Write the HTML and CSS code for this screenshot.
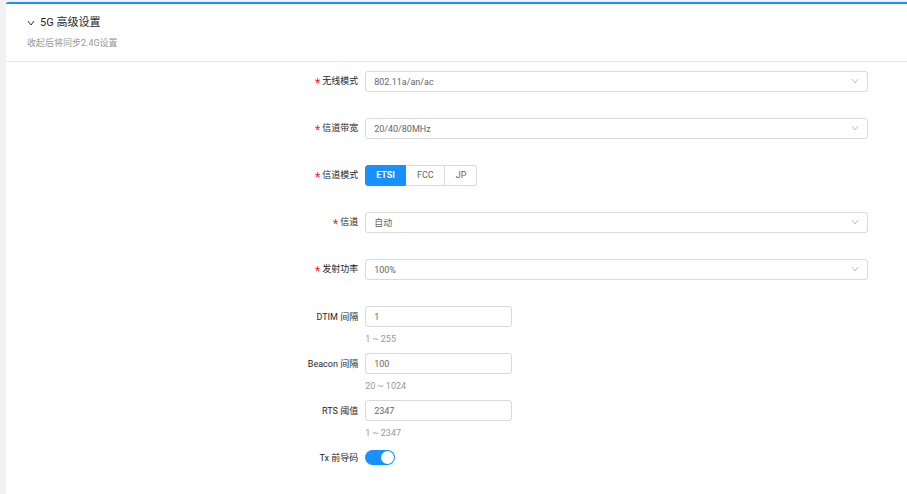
FILE: index.html
```
<!DOCTYPE html>
<html lang="zh-CN">
<head>
    <meta charset="UTF-8">
    <meta name="viewport" content="width=device-width, initial-scale=1.0">
    <title>5G 高级设置</title>
    <link rel="stylesheet" href="styles.css">
</head>
<body>
    <div class="card">
        <div class="card-head">
            <button type="button" class="collapse-btn">
                <svg class="arrow" viewBox="0 0 8 8"><path d="M1 2l3 4 3-4"/></svg>
                5G 高级设置
            </button>
            <p class="tip">收起后将同步2.4G设置</p>
        </div>
        <form class="form">
            <div class="form-item required">
                <label for="mode">无线模式</label>
                <div class="select">
                    <select id="mode"><option>802.11a/an/ac</option></select>
                    <svg class="arrow" viewBox="0 0 8 8"><path d="M1 2l3 4 3-4"/></svg>
                </div>
            </div>
            <div class="form-item required">
                <label for="bandwidth">信道带宽</label>
                <div class="select">
                    <select id="bandwidth"><option>20/40/80MHz</option></select>
                    <svg class="arrow" viewBox="0 0 8 8"><path d="M1 2l3 4 3-4"/></svg>
                </div>
            </div>
            <div class="form-item required">
                <label for="etsi">信道模式</label>
                <div class="radio-group">
                    <input type="radio" name="region" id="etsi" checked><label for="etsi">ETSI</label>
                    <input type="radio" name="region" id="fcc"><label for="fcc">FCC</label>
                    <input type="radio" name="region" id="jp"><label for="jp">JP</label>
                </div>
            </div>
            <div class="form-item required">
                <label for="channel">信道</label>
                <div class="select">
                    <select id="channel"><option>自动</option></select>
                    <svg class="arrow" viewBox="0 0 8 8"><path d="M1 2l3 4 3-4"/></svg>
                </div>
            </div>
            <div class="form-item required">
                <label for="power">发射功率</label>
                <div class="select">
                    <select id="power"><option>100%</option></select>
                    <svg class="arrow" viewBox="0 0 8 8"><path d="M1 2l3 4 3-4"/></svg>
                </div>
            </div>
            <div class="form-item">
                <label for="dtim">DTIM 间隔</label>
                <input type="text" class="input" id="dtim" value="1">
                <span class="extra">1 ~ 255</span>
            </div>
            <div class="form-item">
                <label for="beacon">Beacon 间隔</label>
                <input type="text" class="input" id="beacon" value="100">
                <span class="extra">20 ~ 1024</span>
            </div>
            <div class="form-item">
                <label for="rts">RTS 阈值</label>
                <input type="text" class="input" id="rts" value="2347">
                <span class="extra">1 ~ 2347</span>
            </div>
            <div class="form-item">
                <label for="preamble">Tx 前导码</label>
                <input type="checkbox" class="switch" id="preamble" checked>
            </div>
        </form>
    </div>
</body>
</html>
```
FILE: styles.css
```
* {
    box-sizing: border-box;
}
body {
    margin: 0;
    padding: 2px 0 0 6px;
    background: #f0f2f5;
    color: #262626;
    font-family: Roboto, "Noto Sans CJK SC", sans-serif;
    font-size: 9px;
    line-height: 14px;
}
.card {
    min-height: calc(100vh - 2px);
    background: #fff;
    border-top: 2px solid #1890ff;
    border-top-left-radius: 2px;
}
.card-head {
    padding: 11px 21px;
    border-bottom: 1px solid #e8e8e8;
}
.collapse-btn {
    display: flex;
    align-items: center;
    gap: 5px;
    padding: 0;
    border: none;
    background: none;
    color: #262626;
    font: inherit;
    font-size: 11px;
    line-height: 16px;
    cursor: pointer;
}
.arrow {
    width: 8px;
    height: 8px;
    fill: none;
    stroke: #333;
    stroke-width: 1;
}
.tip {
    margin: 5px 0 0;
    color: #999;
}
.form {
    padding: 9px 39px 0 0;
}
.form-item {
    display: grid;
    grid-template-columns: 10fr 14fr;
    align-items: center;
    grid-template-rows: 21px 26px;
}
.form-item > label {
    padding-right: 7px;
    text-align: right;
}
.required > label::before {
    content: "*";
    margin-right: 2px;
    color: #f5222d;
    font-size: 12px;
    line-height: 1;
    vertical-align: -3px;
}
.select {
    position: relative;
}
.select select,
.input {
    display: block;
    height: 21px;
    padding: 0 8px;
    border: 1px solid #d9d9d9;
    border-radius: 3px;
    background: #fff;
    color: #666;
    font: inherit;
}
.select select {
    width: 100%;
    appearance: none;
}
.select .arrow {
    position: absolute;
    top: 6px;
    right: 9px;
    stroke: #bfbfbf;
    pointer-events: none;
}
.input {
    width: 147px;
}
.extra {
    grid-column: 2;
    align-self: start;
    padding-top: 5px;
    color: #999;
}
.radio-group {
    display: flex;
}
.radio-group input {
    position: absolute;
    opacity: 0;
}
.radio-group label {
    height: 21px;
    padding: 0 10px 0 11px;
    border: 1px solid #d9d9d9;
    border-left: none;
    color: #666;
    line-height: 19px;
    cursor: pointer;
}
.radio-group label:first-of-type {
    padding-left: 10px;
    border-left: 1px solid #d9d9d9;
    border-radius: 3px 0 0 3px;
}
.radio-group label:last-of-type {
    border-radius: 0 3px 3px 0;
}
.radio-group input:checked + label {
    border-color: #1890ff;
    background: #1890ff;
    color: #fff;
    font-weight: bold;
}
.switch {
    width: 30px;
    height: 15px;
    margin: 0;
    padding: 1px;
    border-radius: 8px;
    background: #1890ff;
    appearance: none;
    cursor: pointer;
}
.switch::before {
    content: "";
    display: block;
    width: 13px;
    height: 13px;
    margin-left: auto;
    border-radius: 50%;
    background: #fff;
}
.switch:not(:checked) {
    background: #bfbfbf;
}
.switch:not(:checked)::before {
    margin-left: 0;
}
```
